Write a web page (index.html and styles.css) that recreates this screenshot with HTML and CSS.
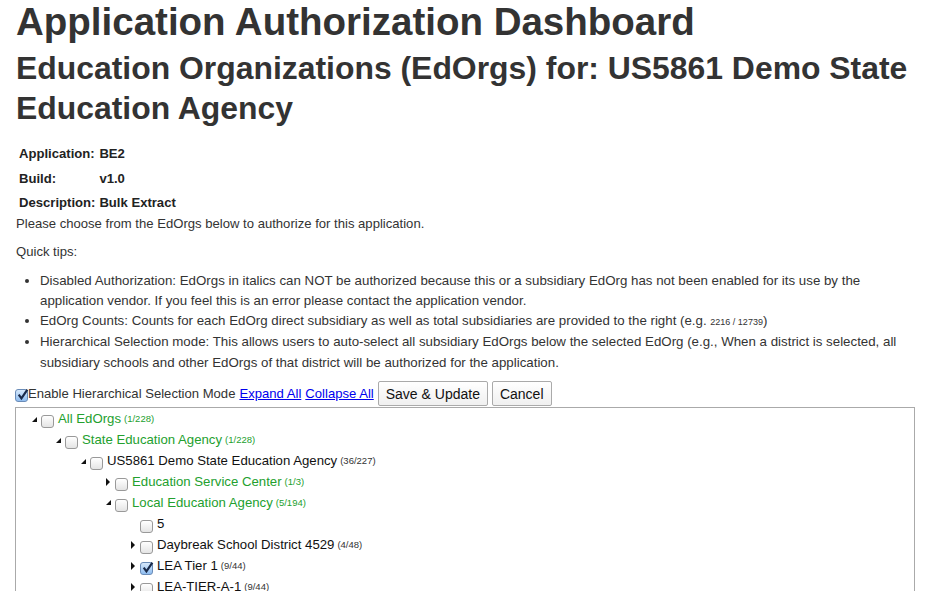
FILE: index.html
```html
<!DOCTYPE html>
<html>
<head>
<meta charset="utf-8">
<link rel="stylesheet" href="styles.css">
</head>
<body>
<div class="page">
  <h1>Application Authorization Dashboard</h1>
  <h2>Education Organizations (EdOrgs) for: US5861 Demo State Education Agency</h2>
  <table class="info">
    <tr><th>Application:</th><td>BE2</td></tr>
    <tr><th>Build:</th><td>v1.0</td></tr>
    <tr><th>Description:</th><td>Bulk Extract</td></tr>
  </table>
  <p class="intro">Please choose from the EdOrgs below to authorize for this application.</p>
  <p class="tips-title">Quick tips:</p>
  <ul class="tips">
    <li>Disabled Authorization: EdOrgs in italics can NOT be authorized because this or a subsidiary EdOrg has not been enabled for its use by the application vendor. If you feel this is an error please contact the application vendor.</li>
    <li>EdOrg Counts: Counts for each EdOrg direct subsidiary as well as total subsidiaries are provided to the right (e.g. <span class="small">2216 / 12739</span>)</li>
    <li>Hierarchical Selection mode: This allows users to auto-select all subsidiary EdOrgs below the selected EdOrg (e.g., When a district is selected, all subsidiary schools and other EdOrgs of that district will be authorized for the application.</li>
  </ul>
  <div class="controls">
    <span class="cb checked"><svg viewBox="0 0 12 12"><path d="M2.5 6.2 L5 9.5 L10.5 1.5" fill="none" stroke="#1a2a4a" stroke-width="2"/></svg></span><span class="label">Enable Hierarchical Selection Mode</span>
    <a href="#">Expand All</a>
    <a href="#">Collapse All</a>
    <button class="btn">Save &amp; Update</button>
    <button class="btn">Cancel</button>
  </div>
  <div class="tree">
    <div class="row l0"><span class="tri open"></span><span class="cb"></span><span class="name green">All EdOrgs</span><span class="count">(1/228)</span></div>
    <div class="row l1"><span class="tri open"></span><span class="cb"></span><span class="name green">State Education Agency</span><span class="count">(1/228)</span></div>
    <div class="row l2"><span class="tri open"></span><span class="cb"></span><span class="name">US5861 Demo State Education Agency</span><span class="count">(36/227)</span></div>
    <div class="row l3"><span class="tri closed"></span><span class="cb"></span><span class="name green">Education Service Center</span><span class="count">(1/3)</span></div>
    <div class="row l3"><span class="tri open"></span><span class="cb"></span><span class="name green">Local Education Agency</span><span class="count">(5/194)</span></div>
    <div class="row l4"><span class="tri none"></span><span class="cb"></span><span class="name">5</span></div>
    <div class="row l4"><span class="tri closed"></span><span class="cb"></span><span class="name">Daybreak School District 4529</span><span class="count">(4/48)</span></div>
    <div class="row l4"><span class="tri closed"></span><span class="cb checked"><svg viewBox="0 0 12 12"><path d="M2.5 6.2 L5 9.5 L10.5 1.5" fill="none" stroke="#1a2a4a" stroke-width="2"/></svg></span><span class="name">LEA Tier 1</span><span class="count">(9/44)</span></div>
    <div class="row l4"><span class="tri closed"></span><span class="cb"></span><span class="name">LEA-TIER-A-1</span><span class="count">(9/44)</span></div>
  </div>
</div>
</body>
</html>
```

FILE: styles.css
```css
html, body {
  margin: 0;
  padding: 0;
  background: #fff;
}
body {
  font-family: "Liberation Sans", Arial, sans-serif;
  font-size: 13.1px;
  line-height: 20px;
  color: #333;
}
.page {
  padding: 0 15px;
  width: 900px;
}
h1 {
  margin: 0;
  font-size: 38.5px;
  line-height: 44px;
  font-weight: bold;
  color: #333;
  padding-left: 1px;
}
h2 {
  margin: 4px 0 0 0;
  font-size: 31.9px;
  line-height: 40px;
  font-weight: bold;
  color: #333;
  padding-left: 1px;
}
.info {
  border-collapse: collapse;
  margin-top: 14px;
  margin-left: 1px;
}
.info th, .info td {
  text-align: left;
  font-weight: bold;
  padding: 2px 3px;
  height: 20.5px;
  color: #222;
}
.info th {
  padding-right: 1px;
}
.intro {
  margin: -2px 0 8px 0;
  padding-left: 1px;
}
.tips-title {
  margin: 0 0 9px 0;
  padding-left: 1px;
}
.tips {
  margin: 0 0 0 25px;
  padding: 0;
  font-size: 13.3px;
}
.tips li {
  line-height: 20.3px;
}
.small {
  font-size: 9px;
}
.controls {
  display: flex;
  align-items: center;
  height: 26px;
  margin-top: 8px;
}
.controls .label {
  margin-right: 4px;
}
.controls a {
  color: #00e;
  text-decoration: underline;
  margin-right: 4px;
}
.btn {
  font-family: "Liberation Sans", Arial, sans-serif;
  font-size: 14px;
  color: #111;
  background: linear-gradient(#fff, #f0f0f0);
  border: 1px solid #aaa;
  border-radius: 2px;
  height: 25px;
  padding: 0 7px;
  margin-right: 4px;
}
.cb {
  display: inline-block;
  width: 11px;
  height: 11px;
  border: 1px solid #999;
  border-radius: 3px;
  background: linear-gradient(#fff, #e4e4e4);
  position: relative;
  flex: none;
}
.cb.checked {
  background: linear-gradient(#d6e8fb, #8fbdf0);
  border-color: #6a8cb8;
}
.cb svg {
  position: absolute;
  left: 0;
  top: -2px;
  width: 13px;
  height: 13px;
}
.controls .cb {
  margin-top: 3px;
}
.tree {
  border: 1px solid #aaa;
  border-bottom: none;
  height: 182px;
  overflow: hidden;
  padding-top: 1px;
}
.row {
  display: flex;
  align-items: center;
  height: 20.9px;
  white-space: nowrap;
  color: #111;
}
.row .cb {
  margin-top: 5px;
  margin-right: 4px;
}
.tri {
  display: inline-block;
  width: 9px;
  flex: none;
}
.tri.open::before {
  content: "";
  display: block;
  width: 0;
  height: 0;
  border-left: 5px solid transparent;
  border-bottom: 5px solid #111;
}
.tri.closed::before {
  content: "";
  display: block;
  width: 0;
  height: 0;
  border-top: 4px solid transparent;
  border-bottom: 4px solid transparent;
  border-left: 4px solid #111;
}
.l0 { padding-left: 16px; }
.l1 { padding-left: 40px; }
.l2 { padding-left: 65px; }
.l3 { padding-left: 90px; }
.l4 { padding-left: 115px; }
.name {
  font-size: 13.2px;
}
.green {
  color: #23a02e;
}
.count {
  font-size: 9.5px;
  margin-left: 3px;
  color: #333;
}
.row .name.green + .count {
  color: #23a02e;
}
```
